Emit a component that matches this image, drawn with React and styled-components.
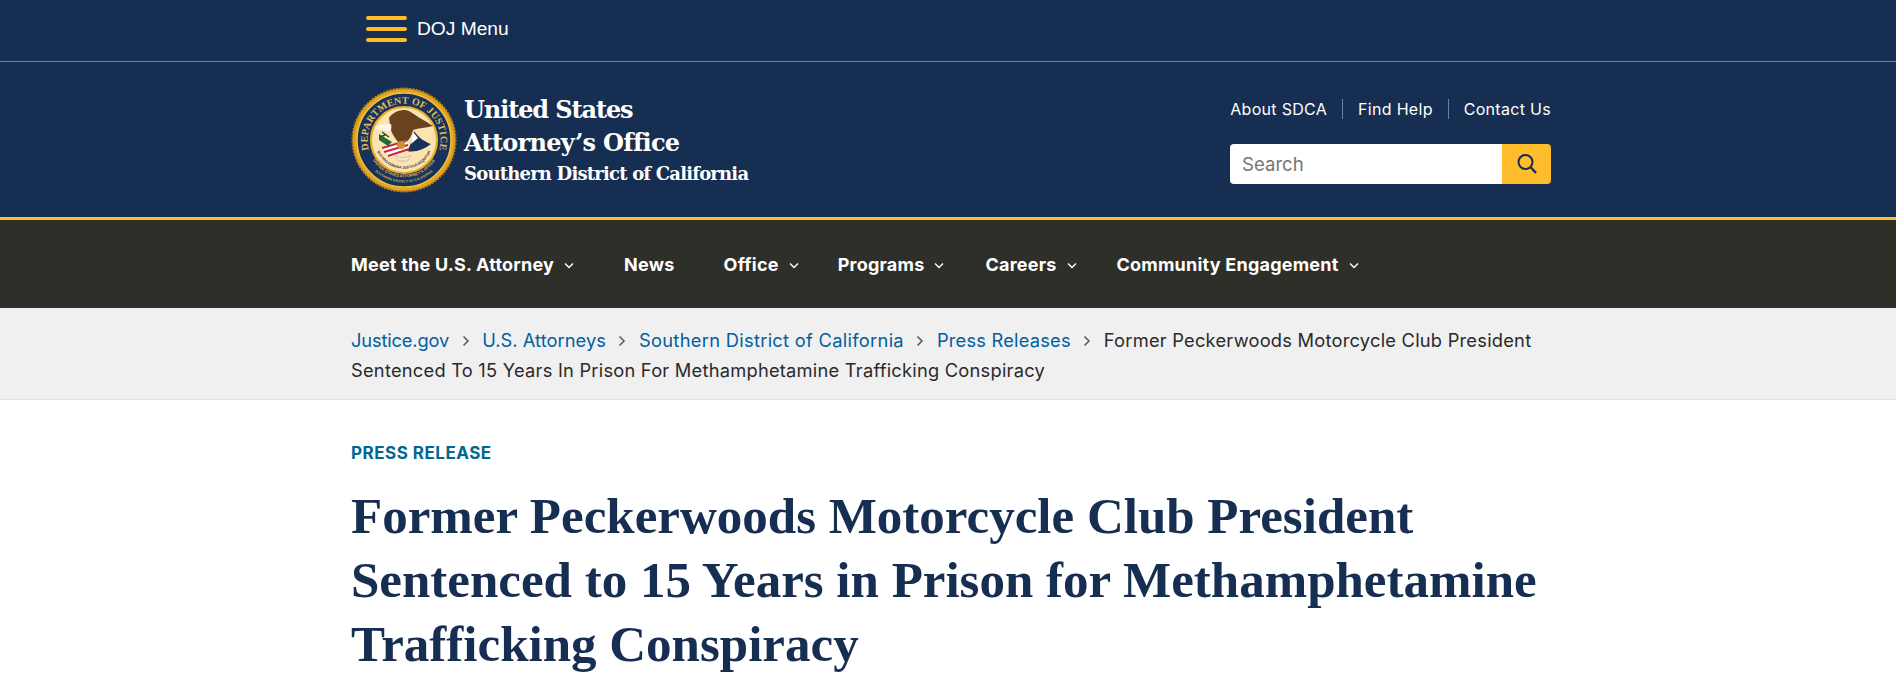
import React from 'react'
import styled, { createGlobalStyle } from 'styled-components'

const navItems = [
  { label: 'Meet the U.S. Attorney', caret: true, gap: 49 },
  { label: 'News', gap: 49 },
  { label: 'Office', caret: true, gap: 38 },
  { label: 'Programs', caret: true, gap: 40 },
  { label: 'Careers', caret: true, gap: 39 },
  { label: 'Community Engagement', caret: true, gap: 0 },
]

const crumbs = [
  { label: 'Justice.gov', spacing: -0.15 },
  { label: 'U.S. Attorneys', spacing: 0.05 },
  { label: 'Southern District of California', spacing: 0.3 },
  { label: 'Press Releases', spacing: 0.2 },
]

function Seal() {
  return (
    <svg width="106" height="106" viewBox="0 0 106 106">
      <defs>
        <path id="sealTop" d="M 17.7 62.4 A 36.5 36.5 0 1 1 88.3 62.4" />
        <path id="sealBottomA" d="M 20 70 A 37 37 0 0 0 86 70" />
        <path id="sealBottomB" d="M 16 74 A 42.5 42.5 0 0 0 90 74" />
        <path id="sealMotto" d="M 24 56 A 29.2 29.2 0 0 0 82 56" />
      </defs>
      <circle cx="53" cy="53" r="51.5" fill="#e3a420" stroke="#b98314" strokeWidth="2" strokeDasharray="2 1.3" />
      <circle cx="53" cy="53" r="47" fill="#17335a" stroke="#f6c244" strokeWidth="1.4" />
      <text fill="#e2bb5c" fontFamily="Liberation Serif, serif" fontSize="10" fontWeight="700" textLength="134">
        <textPath href="#sealTop" startOffset="50%" textAnchor="middle">DEPARTMENT OF JUSTICE</textPath>
      </text>
      <text fill="#e2bb5c" fontFamily="Liberation Sans, sans-serif" fontSize="4" fontWeight="700">
        <textPath href="#sealBottomA" startOffset="50%" textAnchor="middle">UNITED STATES ATTORNEY'S OFFICE</textPath>
      </text>
      <text fill="#c9a650" fontFamily="Liberation Sans, sans-serif" fontSize="3.4" fontWeight="700">
        <textPath href="#sealBottomB" startOffset="50%" textAnchor="middle">SOUTHERN DISTRICT OF CALIFORNIA</textPath>
      </text>
      <circle cx="53" cy="53" r="33" fill="#fde3b0" stroke="#e9ad27" strokeWidth="2.2" />
      <path d="M38 31 C41 26 50 21 58 24 C64 28 74 34 82 39 C74 41 68 41 62 43 C61 50 56 56 50 58 C44 52 39 44 39 38 Z" fill="#6a421f" />
      <path d="M24 41 C29 37 34 37 40 37 C41 42 40 46 36 44 C32 42 28 44 24 41 Z" fill="#fbf6ea" />
      <path d="M63 44 C68 51 74 55 80 57 C72 63 64 66 56 64 C60 58 62 50 63 44 Z" fill="#17335a" />
      <path d="M62 45 L67 51 L60 57 Z" fill="#fff" />
      <path d="M30 60 L55 53 L58 62 L40 70 Z" fill="#fff" />
      <path d="M31 61 L55 54 M33 65 L57 58 M37 69 L58 62" stroke="#c8283c" strokeWidth="2" />
      <path d="M28 47 L41 55 L37 59 L28 53 Z" fill="#1f6b35" />
      <path d="M31 45 L38 50 M29 50 L34 48" stroke="#174f28" strokeWidth="1.4" />
      <circle cx="50" cy="58" r="4" fill="#c9922a" />
      <path d="M44 68 C48 71 56 71 60 68 L57 74 L47 74 Z" fill="#efe6d0" stroke="#b9a67c" strokeWidth="0.5" />
      <text fill="#2a3350" fontFamily="Liberation Sans, sans-serif" fontSize="3.6" fontWeight="700">
        <textPath href="#sealMotto" startOffset="50%" textAnchor="middle">QUI PRO DOMINA JUSTITIA SEQUITUR</textPath>
      </text>
    </svg>
  )
}

function App() {
  return (
    <>
      <GlobalStyle />
      <TopBar>
        <Container>
          <MenuButton>
            <Burger><span /><span /><span /></Burger>
            DOJ Menu
          </MenuButton>
        </Container>
      </TopBar>
      <Header>
        <HeaderInner>
          <Brand>
            <Seal />
            <BrandText>
              <BrandLine $spacing={-1.1}>United States</BrandLine>
              <BrandLine $spacing={-0.7}>Attorney’s Office</BrandLine>
              <BrandSub>Southern District of California</BrandSub>
            </BrandText>
          </Brand>
          <HeaderRight>
            <UtilityLinks>
              <a>About SDCA</a>
              <a>Find Help</a>
              <a>Contact Us</a>
            </UtilityLinks>
            <SearchBox>
              <SearchInput placeholder="Search" />
              <SearchButton>
                <svg width="22" height="22" viewBox="0 0 22 22" fill="none" stroke="#162e51" strokeWidth="2">
                  <circle cx="9.5" cy="9" r="7" />
                  <path d="M14.5 14 L20 20" strokeWidth="2.4" />
                </svg>
              </SearchButton>
            </SearchBox>
          </HeaderRight>
        </HeaderInner>
      </Header>
      <Nav>
        <NavInner>
          {navItems.map((item) => (
            <NavItem key={item.label} $gap={item.gap}>
              {item.label}
              {item.caret && (
                <Caret width="12" height="8" viewBox="0 0 12 8" fill="none" stroke="#fff" strokeWidth="1.4">
                  <path d="M2 1.5 L6 5.5 L10 1.5" />
                </Caret>
              )}
            </NavItem>
          ))}
        </NavInner>
      </Nav>
      <Breadcrumbs>
        <CrumbText>
          {crumbs.map((c) => (
            <React.Fragment key={c.label}>
              <CrumbLink $spacing={c.spacing}>{c.label}</CrumbLink>
              <CrumbSep>
                <svg width="10" height="14" viewBox="0 0 10 14" fill="none" stroke="#5c5c5c" strokeWidth="1.6">
                  <path d="M2.5 2.5 L7 7 L2.5 11.5" />
                </svg>
              </CrumbSep>
            </React.Fragment>
          ))}
          Former Peckerwoods Motorcycle Club President Sentenced To 15 Years In Prison For Methamphetamine Trafficking Conspiracy
        </CrumbText>
      </Breadcrumbs>
      <Main>
        <Eyebrow>PRESS RELEASE</Eyebrow>
        <Title>Former Peckerwoods Motorcycle Club President Sentenced to 15 Years in Prison for Methamphetamine Trafficking Conspiracy</Title>
      </Main>
    </>
  )
}

const GlobalStyle = createGlobalStyle`
  html, body {
    margin: 0;
    padding: 0;
    background: #fff;
    overflow: hidden;
  }
  body {
    font-family: "Inter", "Liberation Sans", sans-serif;
  }
`

const Container = styled.div`
  width: 1200px;
  margin-left: 351px;
`

const TopBar = styled.div`
  height: 61px;
  background: #162e51;
  border-bottom: 1px solid #6d7f9a;
`

const MenuButton = styled.div`
  display: flex;
  align-items: center;
  height: 58px;
  padding-left: 15px;
  color: #fff;
  font-family: "Liberation Sans", Arial, sans-serif;
  font-size: 19.2px;
`

const Burger = styled.div`
  display: flex;
  flex-direction: column;
  gap: 7px;
  width: 41px;
  margin-right: 10px;
  span {
    display: block;
    height: 4px;
    border-radius: 2px;
    background: #ffbc2b;
  }
`

const Header = styled.header`
  height: 155px;
  background: #162e51;
  border-bottom: 3px solid #ffbc2b;
`

const HeaderInner = styled(Container)`
  display: flex;
  justify-content: space-between;
  height: 100%;
`

const Brand = styled.div`
  display: flex;
  align-items: center;
  gap: 7px;
`

const BrandText = styled.div`
  padding-top: 2px;
  color: #fff;
  font-family: "DejaVu Serif", serif;
`

const BrandLine = styled.div`
  font-size: 24px;
  font-weight: 700;
  line-height: 32.5px;
  letter-spacing: ${(p) => p.$spacing}px;
`

const BrandSub = styled.div`
  margin-top: 2px;
  font-size: 18px;
  font-weight: 700;
  line-height: 26px;
  letter-spacing: -0.8px;
`

const HeaderRight = styled.div`
  display: flex;
  flex-direction: column;
  align-items: flex-end;
  padding-top: 39px;
`

const UtilityLinks = styled.div`
  display: flex;
  height: 16px;
  align-items: center;
  color: #fff;
  font-size: 16px;
  letter-spacing: 0.3px;
  a + a {
    margin-left: 15px;
    padding-left: 15px;
    border-left: 1px solid #6d7f9a;
  }
`

const SearchBox = styled.div`
  display: flex;
  width: 321px;
  height: 40px;
  margin-top: 27px;
  border-radius: 4px;
  overflow: hidden;
`

const SearchInput = styled.input`
  flex: 1;
  min-width: 0;
  border: 0;
  outline: 0;
  padding: 0 12px;
  font-family: inherit;
  font-size: 18.6px;
  &::placeholder {
    color: #757575;
  }
`

const SearchButton = styled.div`
  display: flex;
  align-items: center;
  justify-content: center;
  width: 49px;
  background: #ffbc2b;
`

const Nav = styled.nav`
  height: 88px;
  background: #2f2f2a;
`

const NavInner = styled(Container)`
  display: flex;
  align-items: center;
  height: 100%;
`

const NavItem = styled.div`
  display: flex;
  align-items: center;
  gap: 9px;
  margin-right: ${(p) => p.$gap}px;
  color: #fff;
  font-size: 18px;
  font-weight: 700;
  letter-spacing: 0.22px;
`

const Caret = styled.svg`
  margin-top: 4px;
`

const Breadcrumbs = styled.div`
  height: 91px;
  background: #f0f0f0;
  border-bottom: 1px solid #dfe1e2;
`

const CrumbText = styled(Container)`
  padding-top: 18px;
  color: #2a2a2a;
  font-size: 18.3px;
  line-height: 29px;
  letter-spacing: 0.23px;
`

const CrumbLink = styled.span`
  color: #005ea2;
  letter-spacing: ${(p) => p.$spacing}px;
`

const CrumbSep = styled.span`
  display: inline-block;
  width: 33px;
  text-align: center;
  vertical-align: -1px;
`

const Main = styled(Container)`
  padding-top: 43px;
`

const Eyebrow = styled.div`
  color: #00688f;
  font-size: 17px;
  font-weight: 700;
  line-height: 20px;
  letter-spacing: 0.5px;
`

const Title = styled.h1`
  margin: 21px 0 0;
  color: #162e51;
  font-family: "Liberation Serif", serif;
  font-size: 51px;
  font-weight: 700;
  line-height: 64px;
`

export default App
